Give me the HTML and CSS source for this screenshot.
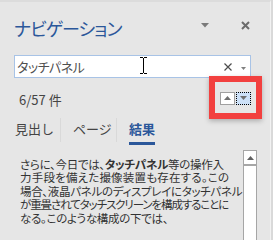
FILE: index.html
```html
<!DOCTYPE html>
<html lang="ja">

<head>
  <meta charset="UTF-8">
  <title>ナビゲーション</title>
  <link rel="stylesheet" href="styles.css">
</head>

<body>
  <div class="pane">
    <div class="head">
      <div class="title">ナビゲーション</div>
      <svg class="menu-arrow" width="8" height="5" viewBox="0 0 8 5"><path d="M0 0h8L4 4.5z" fill="#7a7a7a"/></svg>
      <svg class="close" width="9" height="9" viewBox="0 0 9 9"><path d="M1 1l7 7M8 1L1 8" stroke="#6b6b6b" stroke-width="2"/></svg>
    </div>

    <div class="search">
      <span class="query">タッチパネル</span>
      <svg class="ibeam" width="9" height="17" viewBox="0 0 9 17"><path d="M1 0.5h3M5 0.5h3M4.5 1v15M1 16.5h3M5 16.5h3" stroke="#000" stroke-width="1"/></svg>
      <svg class="clear" width="8" height="8" viewBox="0 0 8 8"><path d="M0.5 0.5l7 7M7.5 0.5l-7 7" stroke="#4d4d4d" stroke-width="1.2"/></svg>
      <svg class="drop" width="5" height="3" viewBox="0 0 5 3"><path d="M0 0h5L2.5 3z" fill="#808080"/></svg>
    </div>

    <div class="count-row">
      <div class="count">6/57 件</div>
      <div class="nav-btns">
        <div class="highlight"></div>
        <div class="nav-btn up">
          <svg width="7" height="4" viewBox="0 0 7 4"><path d="M0 4h7L3.5 0z" fill="#707070"/></svg>
        </div>
        <div class="nav-btn down">
          <svg width="7" height="4" viewBox="0 0 7 4"><path d="M0 0h7L3.5 4z" fill="#707070"/></svg>
        </div>
      </div>
    </div>

    <div class="tabs">
      <div class="tab first"><span>見出し</span></div>
      <div class="tab"><span>ページ</span></div>
      <div class="tab active"><span>結果</span></div>
    </div>

    <div class="results">
      <p class="snippet">
        さらに、今日では、<b>タッチパネル</b>等の操作入<br>
        <span class="wide">力手段を備えた撮像装置も存在する。この</span><br>
        場合、液晶パネルのディスプレイにタッチパネル<br>
        <span class="tight">が重畳されてタッチスクリーンを構成することに</span><br>
        なる。このような構成の下では、
      </p>
      <div class="scrollbar">
        <div class="scroll-up">
          <svg width="7" height="4" viewBox="0 0 7 4"><path d="M0 4h7L3.5 0z" fill="#606060"/></svg>
        </div>
      </div>
    </div>
  </div>
</body>

</html>
```

FILE: styles.css
```css
* {
  margin: 0;
  padding: 0;
  box-sizing: border-box;
  font-family: "Noto Sans CJK JP", "Noto Sans", sans-serif;
}

body {
  background: #d9d9d9;
  width: 273px;
  height: 240px;
  overflow: hidden;
}

.pane {
  width: 271px;
  height: 240px;
  background: #e6e6e6;
  border-right: 1px solid #f2f2f2;
  border-top: 2px solid #dcdcdc;
  display: flex;
  flex-direction: column;
}

.head {
  height: 53px;
  display: flex;
  align-items: center;
  padding-left: 14px;
}

.title {
  font-size: 18px;
  color: #2b579a;
  font-feature-settings: "palt";
  letter-spacing: -1px;
  margin-top: -1px;
}

.menu-arrow {
  margin-left: auto;
  margin-bottom: 6px;
}

.close {
  margin-left: 32px;
  margin-right: 20px;
  margin-bottom: 6px;
}

.search {
  margin-left: 14px;
  width: 237px;
  height: 23px;
  background: #fff;
  border: 1px solid #a8c3e6;
  display: flex;
  align-items: center;
  padding-left: 2px;
  position: relative;
}

.query {
  font-size: 13px;
  color: #505050;
  font-feature-settings: "palt";
  letter-spacing: -0.5px;
}

.ibeam {
  position: absolute;
  left: 124px;
  top: 1px;
}

.clear {
  margin-left: auto;
}

.drop {
  margin-left: 9px;
  margin-right: 4px;
  margin-top: 3px;
}

.count-row {
  height: 40px;
  display: flex;
  align-items: center;
}

.count {
  padding-left: 19px;
  font-size: 13px;
  color: #444;
  margin-top: 3px;
}

.nav-btns {
  margin-left: auto;
  margin-right: 19px;
  display: flex;
  gap: 1px;
  position: relative;
}

.nav-btn {
  width: 15px;
  height: 13px;
  display: flex;
  align-items: center;
  justify-content: center;
}

.nav-btn.up {
  background: #fff;
  border: 1px solid #a0a0a0;
}

.nav-btn.down {
  background: #cce0f7;
  border: 1px dotted #000;
}

.highlight {
  position: absolute;
  left: -11px;
  right: -11px;
  top: -16px;
  bottom: -14px;
  border: 6px solid #f2403f;
  box-shadow: 0 2px 5px rgba(0, 0, 0, 0.25);
}

.tabs {
  height: 27px;
  display: flex;
  padding-left: 3px;
}

.tab {
  width: 56px;
  padding-left: 12px;
  font-size: 13px;
  color: #444;
  border-left: 1px solid #d9d9d9;
  height: 24px;
}

.tab.first {
  width: 57px;
  border-left: none;
}

.tab span {
  display: inline-block;
  height: 27px;
  padding-top: 1px;
}

.tab.active span {
  color: #2b579a;
  font-weight: bold;
  border-bottom: 3px solid #2b579a;
}

.results {
  flex: 1;
  display: flex;
  padding-top: 5px;
}

.snippet {
  padding-left: 20px;
  padding-top: 8px;
  font-size: 11.5px;
  line-height: 13.4px;
  color: #333;
  font-feature-settings: "palt";
  letter-spacing: -0.3px;
  white-space: nowrap;
}

.snippet .wide {
  letter-spacing: 0.2px;
}

.snippet .tight {
  letter-spacing: -1.1px;
}

.snippet b {
  font-weight: bold;
}

.scrollbar {
  margin-left: auto;
  margin-right: 13px;
  width: 14px;
  background: #fff;
  border: 1px solid #a6a6a6;
  border-bottom: none;
}

.scroll-up {
  height: 15px;
  border-bottom: 2px solid #a6a6a6;
  display: flex;
  align-items: center;
  justify-content: center;
}
```
